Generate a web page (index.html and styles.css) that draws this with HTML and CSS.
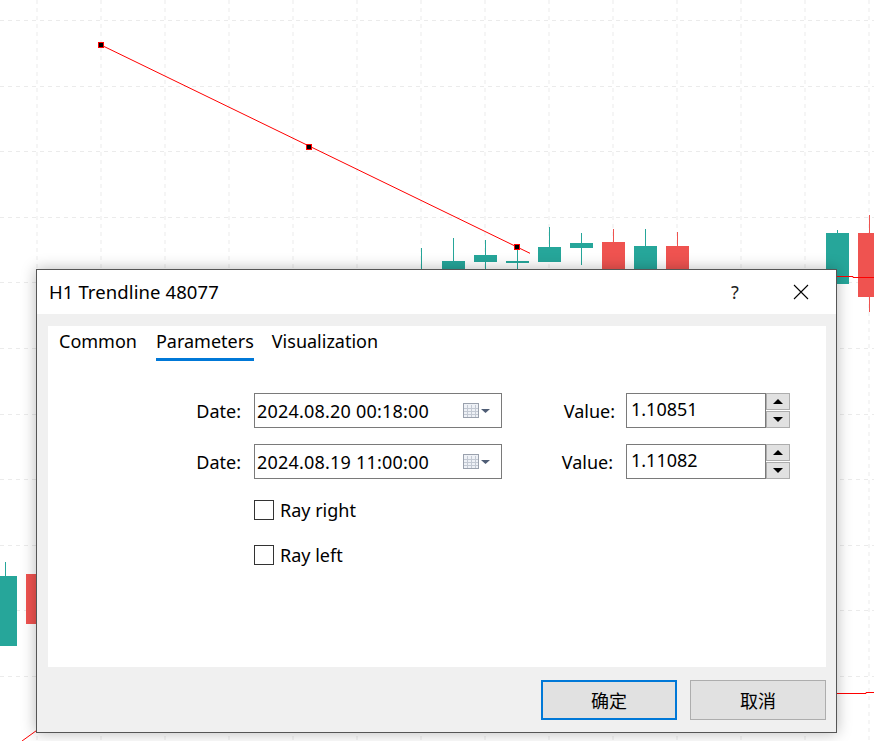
FILE: index.html
```html
<!DOCTYPE html>
<html lang="en">
<head>
    <meta charset="UTF-8">
    <title>H1 Trendline 48077</title>
    <link rel="stylesheet" href="styles.css">
</head>
<body>
<div class="screen">
    <!-- chart canvas behind the dialog -->
    <svg class="chart" width="874" height="741" viewBox="0 0 874 741">
        <g class="grid">
            <line x1="37" y1="0" x2="37" y2="741"/>
            <line x1="101" y1="0" x2="101" y2="741"/>
            <line x1="165" y1="0" x2="165" y2="741"/>
            <line x1="229" y1="0" x2="229" y2="741"/>
            <line x1="293" y1="0" x2="293" y2="741"/>
            <line x1="357" y1="0" x2="357" y2="741"/>
            <line x1="421" y1="0" x2="421" y2="741"/>
            <line x1="485" y1="0" x2="485" y2="741"/>
            <line x1="549" y1="0" x2="549" y2="741"/>
            <line x1="613" y1="0" x2="613" y2="741"/>
            <line x1="677" y1="0" x2="677" y2="741"/>
            <line x1="741" y1="0" x2="741" y2="741"/>
            <line x1="805" y1="0" x2="805" y2="741"/>
            <line x1="869" y1="0" x2="869" y2="741"/>
            <line x1="0" y1="20.5" x2="874" y2="20.5"/>
            <line x1="0" y1="86.5" x2="874" y2="86.5"/>
            <line x1="0" y1="151.5" x2="874" y2="151.5"/>
            <line x1="0" y1="217.5" x2="874" y2="217.5"/>
            <line x1="0" y1="282.5" x2="874" y2="282.5"/>
            <line x1="0" y1="348.5" x2="874" y2="348.5"/>
            <line x1="0" y1="414.5" x2="874" y2="414.5"/>
            <line x1="0" y1="479.5" x2="874" y2="479.5"/>
            <line x1="0" y1="545.5" x2="874" y2="545.5"/>
            <line x1="0" y1="610.5" x2="874" y2="610.5"/>
            <line x1="0" y1="676.5" x2="874" y2="676.5"/>
        </g>

        <g class="bull">
            <line x1="421.5" y1="248" x2="421.5" y2="280"/>
            <line x1="453.5" y1="238" x2="453.5" y2="280"/>
            <rect x="442" y="261" width="23" height="20"/>
            <line x1="485.5" y1="240" x2="485.5" y2="280"/>
            <rect x="474" y="255" width="23" height="7"/>
            <line x1="517.5" y1="247" x2="517.5" y2="280"/>
            <rect x="506" y="261" width="23" height="2"/>
            <line x1="549.5" y1="227" x2="549.5" y2="250"/>
            <rect x="538" y="247" width="23" height="15"/>
            <line x1="581.5" y1="233" x2="581.5" y2="265"/>
            <rect x="570" y="243" width="23" height="5"/>
            <line x1="645.5" y1="229" x2="645.5" y2="250"/>
            <rect x="634" y="246" width="23" height="40"/>
            <line x1="837.5" y1="230" x2="837.5" y2="240"/>
            <rect x="826" y="233" width="23" height="51"/>
            <line x1="5.5" y1="562" x2="5.5" y2="580"/>
            <rect x="-6" y="576" width="23" height="70"/>
        </g>
        <g class="bear">
            <line x1="613.5" y1="229" x2="613.5" y2="250"/>
            <rect x="602" y="242" width="23" height="40"/>
            <line x1="677.5" y1="232" x2="677.5" y2="250"/>
            <rect x="666" y="246" width="23" height="40"/>
            <line x1="869.5" y1="215" x2="869.5" y2="312"/>
            <rect x="858" y="233" width="23" height="64"/>
            <rect x="26" y="574" width="23" height="50"/>
        </g>

        <g class="lines">
            <line x1="101" y1="45" x2="530" y2="253.3"/>
            <polyline points="830,276.5 853,276.5 853,277.5 874,277.5"/>
            <polyline points="830,693.5 866,693.5 866,692.5 874,692.5"/>
            <line x1="22" y1="741" x2="40" y2="728"/>
        </g>
        <g class="anchor">
            <rect x="98.5" y="42.5" width="5" height="5"/>
            <rect x="306.5" y="144.5" width="5" height="5"/>
            <rect x="514.5" y="244.5" width="5" height="5"/>
        </g>
    </svg>

    <div class="dialog">
        <div class="titlebar">
            <span class="title">H1 Trendline 48077</span>
            <span class="help">?</span>
            <span class="close">
                <svg width="16" height="16" viewBox="0 0 16 16"><path d="M1 1 L15 15 M15 1 L1 15" stroke="#000" stroke-width="1.1" fill="none"/></svg>
            </span>
        </div>

        <div class="body">
            <div class="panel">
                <div class="tabs">
                    <span class="tab">Common</span>
                    <span class="tab active">Parameters</span>
                    <span class="tab">Visualization</span>
                </div>

                <div class="form">
                    <label class="lbl lbl-date">Date:</label>
                    <div class="datebox">
                        <span class="val">2024.08.20 00:18:00</span>
                        <span class="cal">
                            <svg width="28" height="16" viewBox="0 0 28 16">
                                <rect x="0.5" y="0.5" width="15" height="14" fill="#eef1f6" stroke="#9aa1ad"/>
                                <path d="M4.5 2 V14 M8.5 2 V14 M12.5 2 V14 M1 5.5 H15 M1 8.5 H15 M1 11.5 H15" stroke="#c3c9d3" stroke-width="1"/>
                                <path d="M18 6 H27 L22.5 10 Z" fill="#4f5d75"/>
                            </svg>
                        </span>
                    </div>
                    <label class="lbl lbl-value">Value:</label>
                    <div class="numbox">1.10851</div>
                    <div class="spin">
                        <span class="arrow up"></span>
                        <span class="arrow down"></span>
                    </div>

                    <label class="lbl lbl-date">Date:</label>
                    <div class="datebox">
                        <span class="val">2024.08.19 11:00:00</span>
                        <span class="cal">
                            <svg width="28" height="16" viewBox="0 0 28 16">
                                <rect x="0.5" y="0.5" width="15" height="14" fill="#eef1f6" stroke="#9aa1ad"/>
                                <path d="M4.5 2 V14 M8.5 2 V14 M12.5 2 V14 M1 5.5 H15 M1 8.5 H15 M1 11.5 H15" stroke="#c3c9d3" stroke-width="1"/>
                                <path d="M18 6 H27 L22.5 10 Z" fill="#4f5d75"/>
                            </svg>
                        </span>
                    </div>
                    <label class="lbl lbl-value second">Value:</label>
                    <div class="numbox">1.11082</div>
                    <div class="spin">
                        <span class="arrow up"></span>
                        <span class="arrow down"></span>
                    </div>
                </div>

                <div class="checks">
                    <label class="check"><span class="box"></span>Ray right</label>
                    <label class="check"><span class="box"></span>Ray left</label>
                </div>
            </div>

            <div class="buttons">
                <button class="btn primary">确定</button>
                <button class="btn">取消</button>
            </div>
        </div>
    </div>
</div>
</body>
</html>
```

FILE: styles.css
```css
body { margin: 0; background: #fff; font-family: "Noto Sans", "Noto Sans CJK SC", sans-serif; color: #000; }
.screen { position: relative; width: 874px; height: 741px; overflow: hidden; }

/* chart */
.chart { position: absolute; left: 0; top: 0; }
.grid line { stroke: #ebebeb; stroke-width: 1; stroke-dasharray: 4 4; }
.bull line { stroke: #26a69a; stroke-width: 1; }
.bull rect { fill: #26a69a; }
.bear line { stroke: #ef5350; stroke-width: 1; }
.bear rect { fill: #ef5350; }
.lines line, .lines polyline { stroke: #ff0000; stroke-width: 1; fill: none; }
.anchor rect { fill: #000; stroke: #ff0000; stroke-width: 1; }

/* dialog window */
.dialog { position: absolute; left: 36px; top: 269px; width: 799px; height: 462px; border: 1px solid #555; background: #f0f0f0; box-shadow: 0 0 14px rgba(0, 0, 0, 0.28); display: flex; flex-direction: column; }
.titlebar { height: 44px; background: #fff; display: flex; align-items: center; flex-shrink: 0; }
.title { font-size: 18.5px; padding-left: 12px; flex: 1; letter-spacing: 0.1px; padding-bottom: 2px; }
.help { font-size: 18px; width: 20px; text-align: center; margin-right: 48px; color: #222; }
.close { width: 16px; height: 16px; margin-right: 27px; display: flex; }

.body { flex: 1; display: flex; flex-direction: column; padding: 12px 10px 12px 11px; }
.panel { background: #fff; height: 341px; flex-shrink: 0; }

.tabs { display: flex; padding-left: 11px; height: 35px; }
.tab { font-size: 18px; line-height: 30px; margin-right: 18px; border-bottom: 3px solid transparent; }
.tab:first-child { margin-right: 19px; }
.tab.active { border-bottom-color: #0078d7; }

.form { display: grid; grid-template-columns: 206px 248px 124px 140px 24px; grid-auto-rows: 35px; row-gap: 16px; margin-top: 32px; align-items: center; }
.lbl { font-size: 18px; text-align: right; }
.lbl-date { padding-right: 13px; }
.lbl-value { padding-right: 11px; }
.lbl-value.second { padding-right: 13px; }

.datebox, .numbox { height: 35px; box-sizing: border-box; border: 1px solid #7a7a7a; background: #fff; display: flex; align-items: center; font-size: 18px; }
.datebox .val { padding-left: 2px; flex: 1; letter-spacing: 0.2px; }
.datebox .cal { display: flex; margin-right: 10px; margin-top: 1px; }
.numbox { padding-left: 4px; padding-bottom: 3px; }

.spin { height: 35px; display: flex; flex-direction: column; gap: 1px; }
.arrow { flex: 1; background: #e1e1e1; border: 1px solid #adadad; display: flex; align-items: center; justify-content: center; }
.arrow::after { content: ""; border-left: 5px solid transparent; border-right: 5px solid transparent; }
.arrow.up::after { border-bottom: 5px solid #000; }
.arrow.down::after { border-top: 5px solid #000; }

.checks { display: flex; flex-direction: column; gap: 25px; margin-top: 21px; padding-left: 206px; }
.check { display: flex; align-items: center; font-size: 18px; height: 20px; }
.check .box { width: 18px; height: 18px; border: 1px solid #333; margin-right: 6px; background: #fff; flex-shrink: 0; }

.buttons { display: flex; justify-content: flex-end; gap: 13px; margin-top: 13px; }
.btn { width: 136px; height: 40px; background: #e1e1e1; border: 1px solid #adadad; font-family: "Noto Sans CJK SC", sans-serif; font-size: 18px; color: #000; padding: 0; }
.btn.primary { border: 2px solid #0078d7; }
```
